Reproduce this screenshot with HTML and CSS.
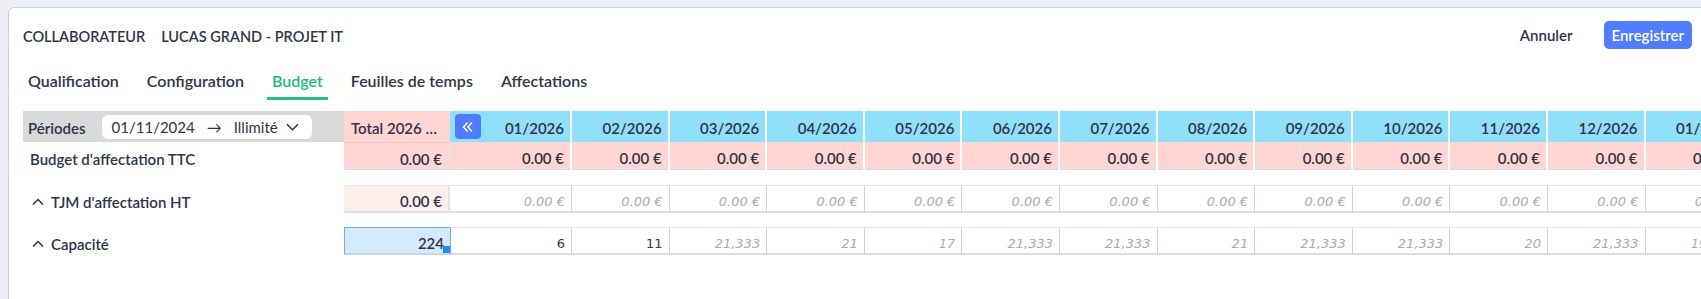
FILE: index.html
```html
<!DOCTYPE html>
<html>
<head>
<title>Collaborateur - Budget</title>
<link rel="stylesheet" href="styles.css">
</head>
<body>
<div class="card">
  <div class="topbar">
    <div class="title"><span>COLLABORATEUR</span><span>LUCAS GRAND - PROJET IT</span></div>
    <div class="actions">
      <button class="btn-link">Annuler</button>
      <button class="btn-primary">Enregistrer</button>
    </div>
  </div>

  <nav class="tabs">
    <a class="tab">Qualification</a>
    <a class="tab">Configuration</a>
    <a class="tab active">Budget</a>
    <a class="tab">Feuilles de temps</a>
    <a class="tab">Affectations</a>
  </nav>

  <div class="budget">
    <div class="row row-head">
      <div class="label periods">
        <span>Périodes</span>
        <div class="date-select">
          <span>01/11/2024</span>
          <span class="arrow">&rarr;</span>
          <span>Illimité</span>
          <svg class="caret" width="13" height="8" viewBox="0 0 13 8"><path d="M1 1.2l5.5 5.5 5.5-5.5" fill="none" stroke="#2f3247" stroke-width="1.6"/></svg>
        </div>
      </div>
      <div class="cell total">Total 2026 …</div>
      <div class="cell month first">
        <button class="collapse">
          <svg width="14" height="14" viewBox="0 0 14 14"><path d="M6.5 2.5L2.5 7l4 4.5M11 2.5L7 7l4 4.5" fill="none" stroke="#fff" stroke-width="1.5"/></svg>
        </button>
        <span>01/2026</span>
      </div>
      <div class="cell month">02/2026</div>
      <div class="cell month">03/2026</div>
      <div class="cell month">04/2026</div>
      <div class="cell month">05/2026</div>
      <div class="cell month">06/2026</div>
      <div class="cell month">07/2026</div>
      <div class="cell month">08/2026</div>
      <div class="cell month">09/2026</div>
      <div class="cell month">10/2026</div>
      <div class="cell month">11/2026</div>
      <div class="cell month">12/2026</div>
      <div class="cell month">01/2027</div>
    </div>

    <div class="row row-budget">
      <div class="label">Budget d'affectation TTC</div>
      <div class="cell total">0.00 €</div>
      <div class="cell pink">0.00 €</div>
      <div class="cell pink">0.00 €</div>
      <div class="cell pink">0.00 €</div>
      <div class="cell pink">0.00 €</div>
      <div class="cell pink">0.00 €</div>
      <div class="cell pink">0.00 €</div>
      <div class="cell pink">0.00 €</div>
      <div class="cell pink">0.00 €</div>
      <div class="cell pink">0.00 €</div>
      <div class="cell pink">0.00 €</div>
      <div class="cell pink">0.00 €</div>
      <div class="cell pink">0.00 €</div>
      <div class="cell pink">0.00 €</div>
    </div>

    <div class="row row-input">
      <div class="label"><svg class="chevron" width="12" height="8" viewBox="0 0 12 8"><path d="M1 6.5l5-5 5 5" fill="none" stroke="#2f3247" stroke-width="1.5"/></svg>TJM d'affectation HT</div>
      <div class="cell total light">0.00 €</div>
      <div class="cell input hint">0.00 €</div>
      <div class="cell input hint">0.00 €</div>
      <div class="cell input hint">0.00 €</div>
      <div class="cell input hint">0.00 €</div>
      <div class="cell input hint">0.00 €</div>
      <div class="cell input hint">0.00 €</div>
      <div class="cell input hint">0.00 €</div>
      <div class="cell input hint">0.00 €</div>
      <div class="cell input hint">0.00 €</div>
      <div class="cell input hint">0.00 €</div>
      <div class="cell input hint">0.00 €</div>
      <div class="cell input hint">0.00 €</div>
      <div class="cell input hint">0.00 €</div>
    </div>

    <div class="row row-input">
      <div class="label"><svg class="chevron" width="12" height="8" viewBox="0 0 12 8"><path d="M1 6.5l5-5 5 5" fill="none" stroke="#2f3247" stroke-width="1.5"/></svg>Capacité</div>
      <div class="cell total selected">224<span class="handle"></span></div>
      <div class="cell input after-selected">6</div>
      <div class="cell input">11</div>
      <div class="cell input hint">21,333</div>
      <div class="cell input hint">21</div>
      <div class="cell input hint">17</div>
      <div class="cell input hint">21,333</div>
      <div class="cell input hint">21,333</div>
      <div class="cell input hint">21</div>
      <div class="cell input hint">21,333</div>
      <div class="cell input hint">21,333</div>
      <div class="cell input hint">20</div>
      <div class="cell input hint">21,333</div>
      <div class="cell input hint">19,333</div>
    </div>
  </div>
</div>
</body>
</html>
```

FILE: styles.css
```css
body{
margin:0;
background:#ecedf6;
font-family:Lato, "Noto Sans", sans-serif;
color:#30334a;
height:299px;
overflow:hidden;
}
.card{
margin:7px 0 0 8px;
width:1730px;
height:330px;
background:#fff;
border:1px solid #cdced8;
border-radius:6px;
}

/* header */
.topbar{
display:flex;
justify-content:space-between;
align-items:center;
margin-top:12px;
padding:0 47px 0 14px;
height:28px;
}
.title{
display:flex;
gap:16px;
font-size:14.5px;
font-weight:600;
padding-top:4px;
}
.actions{
display:flex;
align-items:center;
padding-top:2px;
}
.actions button{
font-family:inherit;
font-size:15px;
font-weight:600;
border:none;
cursor:pointer;
}
.btn-link{
background:none;
color:#30334a;
padding:0;
margin-right:31px;
}
.btn-primary{
height:28px;
padding:0 8px;
background:#507cff;
color:#fff;
border-radius:5px;
}

/* tabs */
.tabs{
display:flex;
gap:18px;
margin:21px 0 0 14px;
}
.tab{
padding:2px 5px 6px;
line-height:20px;
font-size:16px;
font-weight:600;
color:#30334a;
border-bottom:3px solid transparent;
cursor:pointer;
}
.tab.active{
color:#1db876;
border-bottom-color:#1fc07f;
}

/* budget grid */
.budget{
margin:11px 0 0 14px;
}
.row{
display:grid;
grid-template-columns:321px 106px 122px repeat(12, 97.6px);
}
.row-head{
height:31px;
}
.row-budget{
height:28px;
}
.row-input{
height:28px;
margin-top:15px;
}
.row-input + .row-input{
margin-top:14px;
}
.label{
display:flex;
align-items:center;
box-sizing:border-box;
padding-left:7px;
font-size:15px;
font-weight:600;
white-space:nowrap;
}
.row-budget .label,
.row-input .label,
.row-budget .cell,
.row-input .cell{
padding-top:5px;
}
.periods{
background:#d9d9d9;
padding-left:5px;
}
.periods > span{
padding-top:2px;
}
.date-select{
display:flex;
align-items:center;
box-sizing:border-box;
width:210px;
height:24px;
margin-left:16px;
padding:1px 13px 0 10px;
background:#fff;
border-radius:6px;
font-weight:400;
}
.date-select .arrow{
margin:0 12px;
}
.date-select .caret{
margin-left:auto;
}
.chevron{
margin:0 7px 0 2px;
}

.cell{
display:flex;
align-items:center;
justify-content:flex-end;
box-sizing:border-box;
padding-right:6px;
font-size:15px;
font-weight:600;
white-space:nowrap;
overflow:hidden;
position:relative;
}
.row-head .cell{
padding-top:2px;
border-right:2px solid #fff;
}
.total{
background:#ffd6d2;
border-right:1px solid #e9c6c6;
}
.row-head .total{
justify-content:flex-start;
padding-left:7px;
border-right:none;
}
.month{
background:#90e0fb;
}
.row-head .month.first{
justify-content:space-between;
padding-left:5px;
padding-top:0;
}
.month.first span{
padding-top:2px;
}
.collapse{
display:flex;
align-items:center;
justify-content:center;
width:26px;
height:25px;
padding:0;
border:none;
border-radius:4px;
background:#4f7bff;
cursor:pointer;
}
.row-budget .cell{
border-bottom:1px solid #d9dbe8;
}
.pink{
background:#ffd6d2;
border-right:2px solid #fff;
}
.row-budget .total{
border-top:1px solid #edc7c7;
border-right:2px solid #f0dede;
}

.row-input .cell{
border-top:1px solid #e2e4ef;
border-bottom:2px solid #dcdeea;
}
.total.light{
background:#ffefec;
border-right:2px solid #e3e3ea;
}
.input{
background:#fff;
border-right:1px solid #cfd1e1;
font-family:"DejaVu Sans", sans-serif;
font-size:13px;
font-weight:400;
color:#33354a;
}
.input.hint{
font-style:italic;
color:#a8a9b8;
}
.total.selected{
background:#d3e9fc;
border:1px solid #64b0f5;
border-bottom:2px solid #c6d4e6;
border-right:none;
}
.after-selected{
border-left:1px solid #64b0f5;
}
.handle{
position:absolute;
right:0;
bottom:0;
width:7px;
height:7px;
background:#1e8ff2;
}
```
